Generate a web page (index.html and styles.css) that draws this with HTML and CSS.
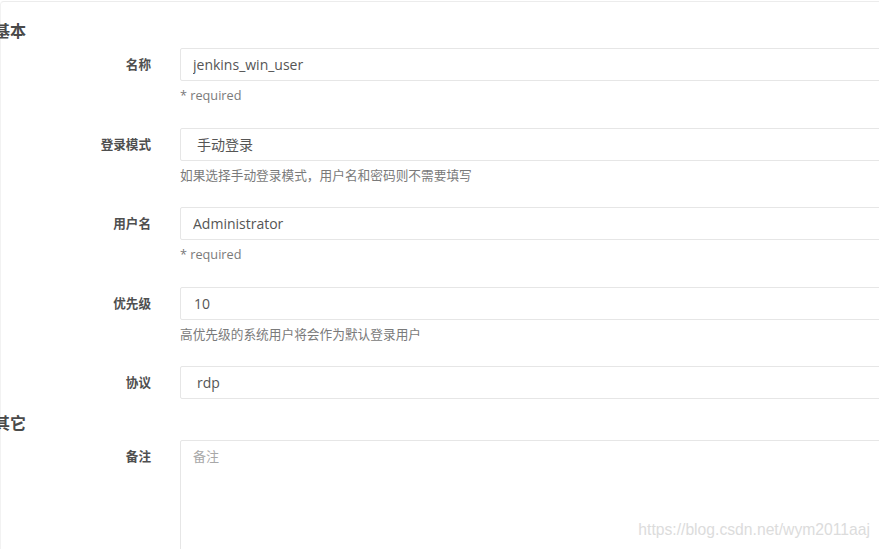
FILE: index.html
```html
<!DOCTYPE html>
<html lang="zh-CN">
<head>
<meta charset="utf-8">
<title>系统用户</title>
<link rel="stylesheet" href="styles.css">
</head>
<body>
<div class="panel">
  <h3 class="section-title">基本</h3>

  <div class="form-group">
    <label class="control-label">名称</label>
    <div class="control">
      <input class="form-input" type="text" value="jenkins_win_user">
      <div class="help">* required</div>
    </div>
  </div>

  <div class="form-group">
    <label class="control-label">登录模式</label>
    <div class="control">
      <select class="form-input form-select"><option>手动登录</option></select>
      <div class="help">如果选择手动登录模式，用户名和密码则不需要填写</div>
    </div>
  </div>

  <div class="form-group">
    <label class="control-label">用户名</label>
    <div class="control">
      <input class="form-input" type="text" value="Administrator">
      <div class="help">* required</div>
    </div>
  </div>

  <div class="form-group">
    <label class="control-label">优先级</label>
    <div class="control">
      <input class="form-input form-num" type="text" value="10">
      <div class="help">高优先级的系统用户将会作为默认登录用户</div>
    </div>
  </div>

  <div class="form-group">
    <label class="control-label">协议</label>
    <div class="control">
      <select class="form-input form-select"><option>rdp</option></select>
    </div>
  </div>

  <h3 class="section-title">其它</h3>

  <div class="form-group">
    <label class="control-label">备注</label>
    <div class="control">
      <textarea class="form-input form-textarea" placeholder="备注"></textarea>
    </div>
  </div>
</div>
<div class="watermark">https://blog.csdn.net/wym2011aaj</div>
</body>
</html>
```

FILE: styles.css
```css
html, body {
  margin: 0;
  padding: 0;
  background: #ffffff;
  overflow: hidden;
  height: 100%;
}

body {
  font-family: "Open Sans", "Noto Sans CJK SC", sans-serif;
  color: #555555;
  position: relative;
}

.panel {
  margin-top: 1px;
  padding-top: 5px;
  height: 100%;
  border-top: 1px solid #ececec;
  border-left: 1px solid #f2f2f2;
  border-top-left-radius: 4px;
}

.section-title {
  margin: 15px 0 8px -7px;
  font-size: 16px;
  line-height: 18px;
  font-weight: bold;
  color: #4a4a4a;
}

.form-group {
  display: grid;
  grid-template-columns: 150px 760px;
  column-gap: 29px;
  margin-bottom: 15px;
}

.control-label {
  text-align: right;
  font-size: 12.6px;
  font-weight: bold;
  line-height: 33px;
  color: #4f4f4f;
}

.form-input {
  display: block;
  box-sizing: border-box;
  width: 100%;
  height: 33px;
  margin: 0;
  border: 1px solid #e6e6e6;
  border-radius: 2px;
  padding: 0 12px;
  font-family: "Open Sans", "Noto Sans CJK SC", sans-serif;
  font-size: 14px;
  color: #555555;
  background: #ffffff;
  outline: none;
}

.form-select {
  appearance: none;
  -webkit-appearance: none;
  padding-left: 16px;
}

.form-num {
  padding-left: 13px;
}

.form-textarea {
  height: 150px;
  padding: 6px 12px;
  font-size: 13px;
  line-height: 18px;
  resize: none;
}

.form-textarea::placeholder {
  color: #a8a8a8;
}

.help {
  margin: 5px 0 8.5px;
  font-size: 12.7px;
  line-height: 18px;
  color: #7a7a7a;
}

.watermark {
  position: absolute;
  right: 9px;
  bottom: 10px;
  font-family: "Liberation Sans", Arial, sans-serif;
  font-size: 15.7px;
  line-height: 18px;
  color: #dcdcdc;
}
```
